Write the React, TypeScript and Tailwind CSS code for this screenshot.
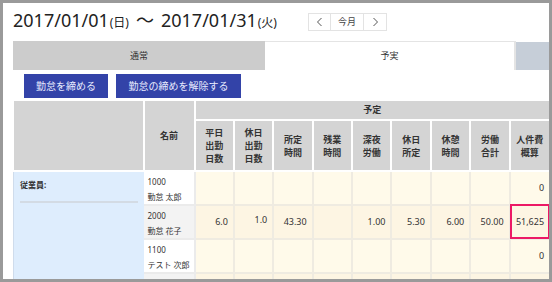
import React from "react";

const font = { fontFamily: '"Noto Sans", "Noto Sans CJK JP", sans-serif' };

const headers = [
  ["平日", "出勤", "日数"],
  ["休日", "出勤", "日数"],
  ["所定", "時間"],
  ["残業", "時間"],
  ["深夜", "労働"],
  ["休日", "所定"],
  ["休憩", "時間"],
  ["労働", "合計"],
  ["人件費", "概算"],
];

const rows = [
  { code: "1000", name: "勤怠 太郎", alt: false, h: "h-[32px]", values: ["", "", "", "", "", "", "", "", "0"] },
  { code: "2000", name: "勤怠 花子", alt: true, h: "h-[31px]", values: ["6.0", "1.0", "43.30", "", "1.00", "5.30", "6.00", "50.00", "51,625"] },
  { code: "1100", name: "テスト 次郎", alt: false, h: "h-[31px]", values: ["", "", "", "", "", "", "", "", "0"] },
  { code: "2100", name: "", alt: true, h: "h-[32px]", values: ["", "", "", "", "", "", "", "", ""] },
];

function Dates() {
  return (
    <div className="flex items-center h-[26px]">
      <div className="w-[295px] text-[18px] text-[#222] leading-[26px] whitespace-nowrap">
        2017/01/01<span className="text-[12px] ml-px">(日)</span>
        <span className="mx-[7px]">〜</span>2017/01/31<span className="text-[12px] ml-px">(火)</span>
      </div>
      <div className="flex h-[18px] border border-[#e3e3e3] text-[9px] text-[#444] mt-[2px]">
        <div className="w-[22px] grid place-items-center border-r border-[#e3e3e3]">
          <svg width="7" height="10" viewBox="0 0 7 10"><path d="M5.5 1 L1.5 5 L5.5 9" fill="none" stroke="#555" strokeWidth="1" /></svg>
        </div>
        <div className="w-[33px] grid place-items-center border-r border-[#e3e3e3]">今月</div>
        <div className="w-[22px] grid place-items-center">
          <svg width="7" height="10" viewBox="0 0 7 10"><path d="M1.5 1 L5.5 5 L1.5 9" fill="none" stroke="#555" strokeWidth="1" /></svg>
        </div>
      </div>
    </div>
  );
}

export default function App() {
  return (
    <div className="w-[552px] h-[282px] bg-[#9a9a9a] p-[3px] overflow-hidden" style={font}>
      <div className="w-full h-full bg-white overflow-hidden pl-[10px] pt-[5px]">
        <Dates />
        <div className="flex h-[29px] mt-[7px] text-[9px] text-[#333]">
          <div className="w-[252px] bg-[#cccccc] grid place-items-center">通常</div>
          <div className="w-[251px] bg-white border-t border-r-2 border-[#e4e4e4] grid place-items-center">予実</div>
          <div className="flex-1 bg-[#c6ced8] mt-px"></div>
        </div>
        <div className="flex gap-[8px] pl-[11px] pt-[4px] h-[31px]">
          <button className="h-[24px] w-[84px] bg-[#3343a8] text-[#e8ebff] text-[10px]">勤怠を締める</button>
          <button className="h-[24px] w-[125px] bg-[#3343a8] text-[#e8ebff] text-[10px]">勤怠の締めを解除する</button>
        </div>
        <table className="table-fixed border-collapse w-[536px] text-[9px] text-[#333]">
          <colgroup>
            <col className="w-[130px]" />
            <col className="w-[51px]" />
            {headers.map((_, i) => (
              <col key={i} className="w-[39.4px]" />
            ))}
          </colgroup>
          <thead>
            <tr className="h-[19px]">
              <th rowSpan={2} className="bg-[#d4d4d4] border-2 border-white border-l-0 border-t-0"></th>
              <th rowSpan={2} className="bg-[#d4d4d4] border-2 border-white border-t-0 font-bold">名前</th>
              <th colSpan={9} className="bg-[#d4d4d4] border-2 border-white border-t-0 border-r-0 font-bold">予定</th>
            </tr>
            <tr className="h-[51px]">
              {headers.map((h, i) => (
                <th key={i} className={`bg-[#d4d4d4] border-2 border-white font-bold leading-[13px] ${i === 8 ? "border-r-0" : ""}`}>
                  {h.map((l, j) => (
                    <div key={j}>{l}</div>
                  ))}
                </th>
              ))}
            </tr>
          </thead>
          <tbody>
            {rows.map((r, ri) => (
              <tr key={ri} className={r.h}>
                {ri === 0 && (
                  <td rowSpan={4} className="bg-[#deedfd] border-l border-l-[#cfdcec] align-top px-[6px] pt-[7px]">
                    <div className="font-bold text-[8px] pb-[10px] border-b-2 border-[#d3dbe4]">従業員:</div>
                  </td>
                )}
                <td className={`${r.alt ? "bg-[#f3f3f3]" : "bg-white"} border-2 border-[#ebebeb] border-l-0 px-[4px] text-[8px] leading-[15px] align-top pt-[2px]`}>
                  <div>{r.code}</div>
                  <div className="whitespace-nowrap">{r.name}</div>
                </td>
                {r.values.map((v, vi) => (
                  <td
                    key={vi}
                    className={`${r.alt ? "bg-[#fdf5e3]" : "bg-[#fffaea]"} border-2 border-[#efebe1] text-right pr-[5px] relative ${vi === 8 ? "border-r-0 pr-[4px]" : ""} ${vi === 1 ? "pb-[5px]" : ""}`}
                  >
                    {v}
                    {ri === 1 && vi === 8 && <span className="absolute -left-[1px] -top-[2px] -right-[1px] -bottom-[1px] border-2 border-[#ec1865]"></span>}
                  </td>
                ))}
              </tr>
            ))}
          </tbody>
        </table>
      </div>
    </div>
  );
}
